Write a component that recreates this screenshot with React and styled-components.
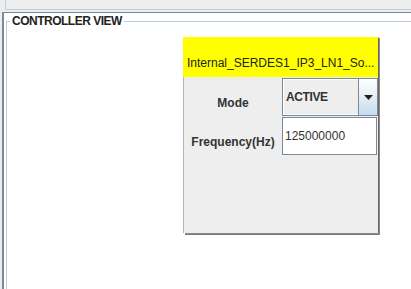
import React from 'react';
import styled, { createGlobalStyle } from 'styled-components';

const GlobalStyle = createGlobalStyle`
  html, body {
    margin: 0;
    padding: 0;
    width: 411px;
    height: 289px;
    overflow: hidden;
    background: #eeeeee;
    font-family: "Liberation Sans", Arial, sans-serif;
  }
`;

const Window = styled.div`
  width: 411px;
  height: 289px;
  display: flex;
  flex-direction: column;
  background: #eeeeee;
`;

const TopStrip = styled.div`
  height: 12px;
  flex: none;
  display: flex;
`;

const TopBox = styled.div`
  flex: 1;
  height: 9px;
  margin-left: 5px;
  border-left: 1px solid #b8cfe5;
  border-bottom: 1px solid #b8cfe5;
`;

const Main = styled.div`
  flex: 1;
  margin-left: 2px;
  border-left: 2px solid #7a8a99;
  border-top: 1px solid #7a8a99;
  background: #ffffff;
  padding: 0 0 0 2px;
  overflow: hidden;
`;

const Frame = styled.fieldset`
  margin: 1px -20px 0 0;
  padding: 9px 0 0 3px;
  height: 300px;
  border: 1px solid #b8cfe5;
  min-width: 0;
`;

const Title = styled.legend`
  padding: 0 2px;
  font-size: 12px;
  line-height: 14px;
  font-weight: bold;
  letter-spacing: -0.5px;
  color: #222;
`;

const Card = styled.div`
  width: 195px;
  margin-left: 173px;
  display: flex;
  flex-direction: column;
  box-shadow: 1px 0 0 rgba(0, 0, 0, 0.25), 2px 1px 0 #8a8a8a, 2px 2px 0 #7a7a7a;
`;

const Header = styled.div`
  height: 40px;
  box-sizing: border-box;
  padding: 19px 0 0 4px;
  background: #ffff00;
  font-size: 12px;
  line-height: 14px;
  color: #222;
  white-space: nowrap;
`;

const Body = styled.div`
  height: 156px;
  box-sizing: border-box;
  background: #eeeeee;
  border-left: 1px solid #b5b5b5;
  display: grid;
  grid-template-columns: 98px 96px;
  grid-template-rows: 39px 39px;
  align-content: start;
`;

const Label = styled.div`
  padding-top: 19px;
  text-align: center;
  font-size: 12px;
  line-height: 14px;
  font-weight: bold;
  color: #333;
  white-space: nowrap;
`;

const Combo = styled.div`
  margin-top: 1px;
  height: 38px;
  box-sizing: border-box;
  border: 1px solid #7a8a99;
  display: flex;
  background: #eeeeee;
`;

const ComboValue = styled.div`
  flex: 1;
  display: flex;
  align-items: center;
  padding-left: 2px;
  border: 1px solid #ffffff;
  border-right: none;
  font-size: 12px;
  font-weight: bold;
  letter-spacing: -0.4px;
  color: #333;
`;

const ArrowButton = styled.div`
  width: 18px;
  border-left: 1px solid #7a8a99;
  background: linear-gradient(#ffffff, #c8dbee);
  display: flex;
  align-items: center;
  justify-content: center;
`;

const Field = styled.div`
  margin-top: 1px;
  height: 38px;
  width: 95px;
  box-sizing: border-box;
  border: 1px solid #7a8a99;
  background: #ffffff;
  display: flex;
  align-items: center;
  padding-left: 2px;
  font-size: 12px;
  color: #333;
`;

export default function App() {
  return (
    <>
      <GlobalStyle />
      <Window>
        <TopStrip>
          <TopBox />
        </TopStrip>
        <Main>
          <Frame>
            <Title>CONTROLLER VIEW</Title>
            <Card>
              <Header>Internal_SERDES1_IP3_LN1_So...</Header>
              <Body>
                <Label>Mode</Label>
                <Combo>
                  <ComboValue>ACTIVE</ComboValue>
                  <ArrowButton>
                    <svg width="9" height="5" viewBox="0 0 9 5">
                      <path d="M0 0 H9 L4.5 5 Z" fill="#222" />
                    </svg>
                  </ArrowButton>
                </Combo>
                <Label>Frequency(Hz)</Label>
                <Field>125000000</Field>
              </Body>
            </Card>
          </Frame>
        </Main>
      </Window>
    </>
  );
}
